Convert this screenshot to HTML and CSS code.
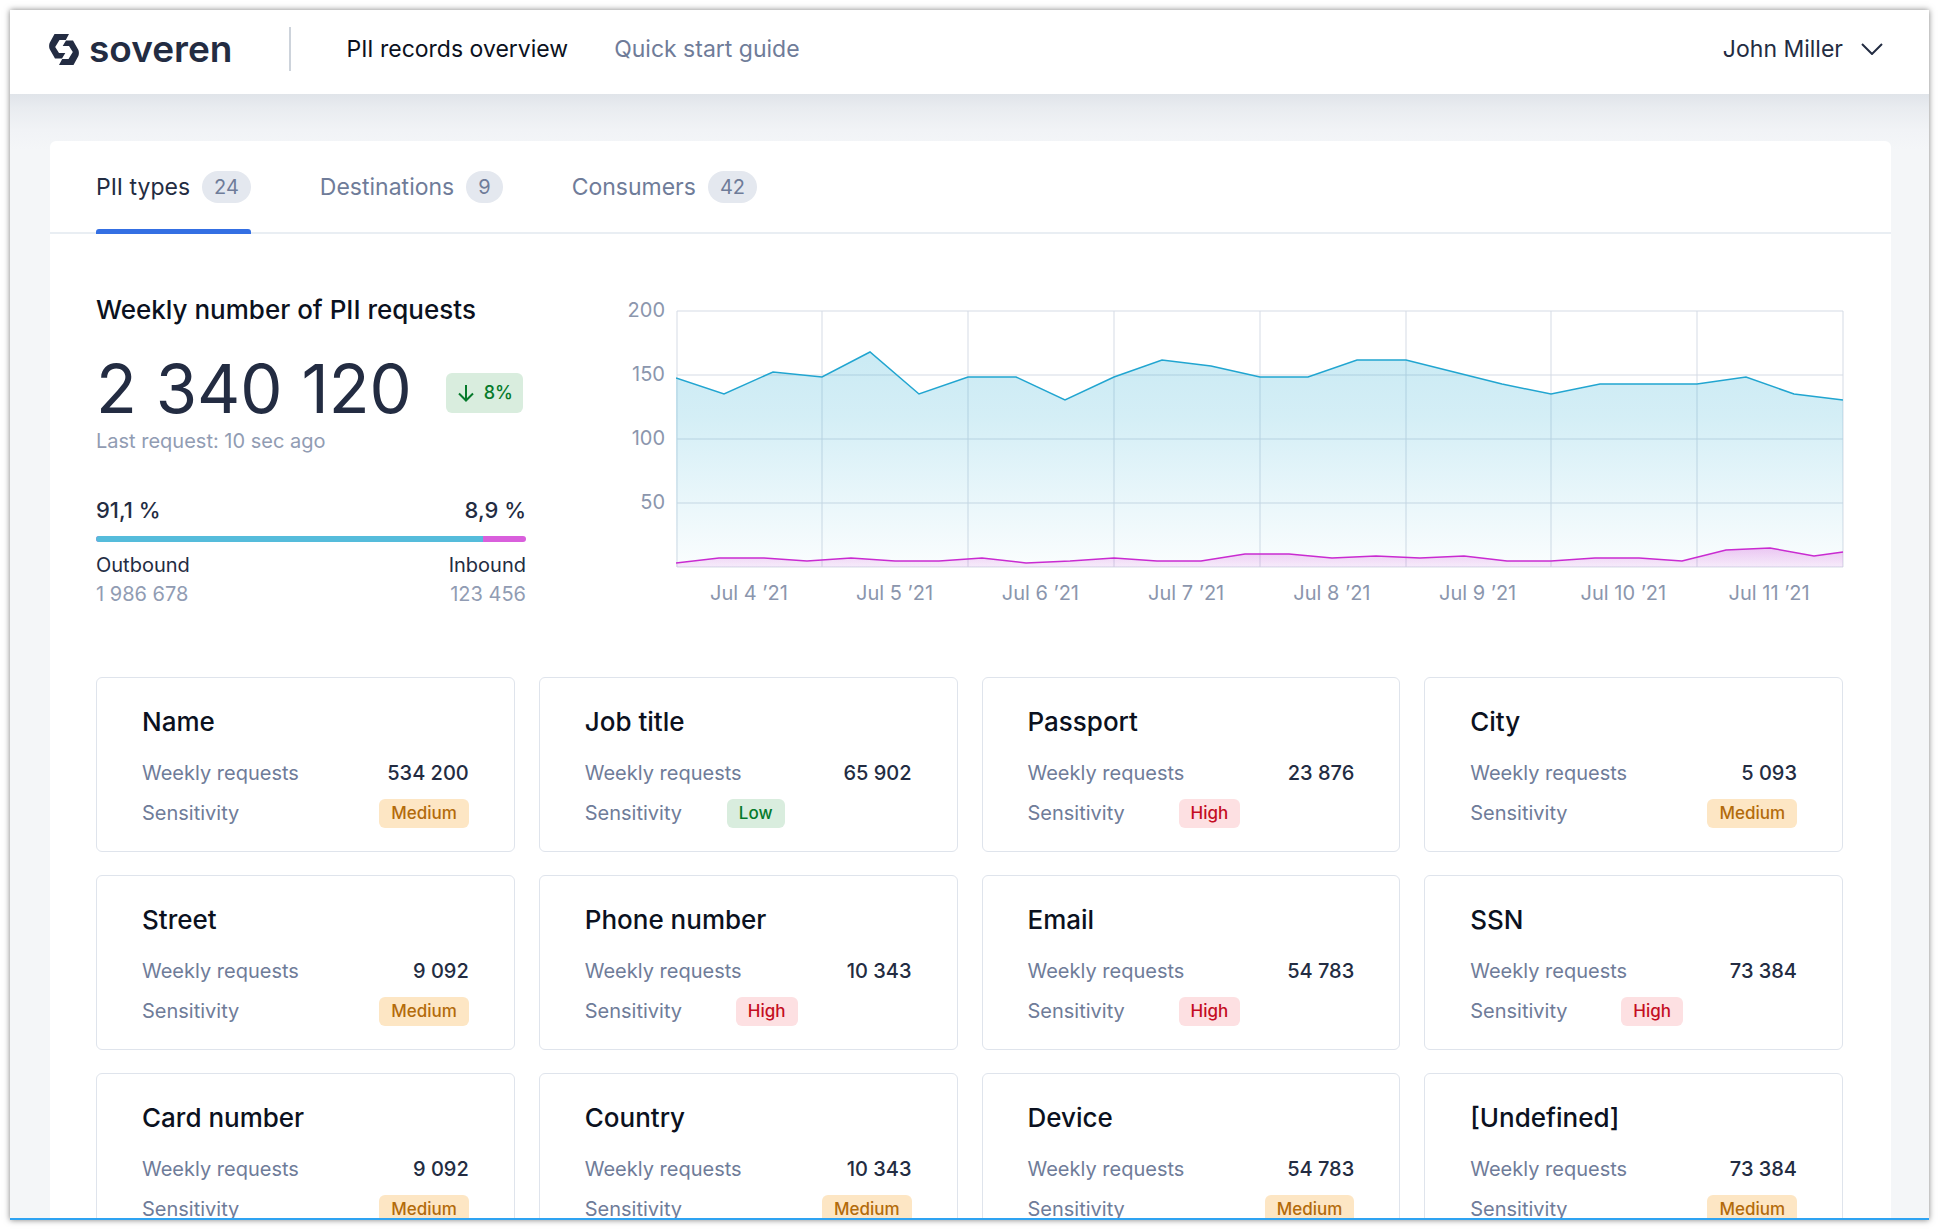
FILE: index.html
```html
<!DOCTYPE html>
<html lang="en">
<head>
<meta charset="utf-8">
<title>PII records overview</title>
<link rel="stylesheet" href="styles.css">
</head>
<body>
<div class="window">
  <header class="header">
    <a class="logo" href="#">
      <svg class="logo__mark" viewBox="0 0 30 31" aria-hidden="true">
        <path d="M5.500 0H20L16.800 6H10.500L6.200 13L10 19H16.300L13 24.500H6L.6 15Q-.4 12 .6 9Z"/>
        <path d="M24.500 31H10L13.200 25H19.500L23.800 18L20 12H13.700L17 6.500H24L29.400 16Q30.400 19 29.400 22Z"/>
      </svg>
      <span class="logo__name">soveren</span>
    </a>
    <nav class="nav">
      <a class="nav__link nav__link--active" href="#">PII records overview</a>
      <a class="nav__link" href="#">Quick start guide</a>
    </nav>
    <button class="user" type="button">John Miller
      <svg class="user__arrow" viewBox="0 0 22 12" aria-hidden="true"><path d="M1 1L11 11L21 1"/></svg>
    </button>
  </header>

  <main class="panel">
    <div class="tabs" role="tablist">
      <button class="tab tab--active" role="tab" aria-selected="true" type="button">PII types <span class="tab__count">24</span></button>
      <button class="tab" role="tab" aria-selected="false" type="button">Destinations <span class="tab__count">9</span></button>
      <button class="tab" role="tab" aria-selected="false" type="button">Consumers <span class="tab__count">42</span></button>
    </div>

    <section class="overview">
      <div class="summary">
        <h1 class="summary__title">Weekly number of PII requests</h1>
        <div class="summary__total">
          <span class="summary__number">2 340 120</span>
          <span class="trend"><svg class="trend__arrow" viewBox="0 0 16 18" aria-hidden="true"><path d="M8 1V16M1 9.500L8 16.500L15 9.500"/></svg>8%</span>
        </div>
        <p class="summary__last">Last request: 10 sec ago</p>
        <div class="split">
          <div class="split__row split__row--share"><span>91,1 %</span><span>8,9 %</span></div>
          <div class="split__bar"><div class="split__out" style="width: 90%"></div></div>
          <div class="split__row split__row--label"><span>Outbound</span><span>Inbound</span></div>
          <div class="split__row split__row--count"><span>1 986 678</span><span>123 456</span></div>
        </div>
      </div>

      <div class="chart">
        <div class="chart__scale"><span>200</span><span>150</span><span>100</span><span>50</span></div>
        <svg class="chart__plot" viewBox="0 0 1168 258" preserveAspectRatio="none" role="img" aria-label="PII requests per day">
          <defs>
            <linearGradient id="out" x1="0" y1="0" x2="0" y2="1"><stop offset="0" stop-color="#1ca6cf" stop-opacity=".23"/><stop offset=".3" stop-color="#1ca6cf" stop-opacity=".19"/><stop offset="1" stop-color="#1ca6cf" stop-opacity=".02"/></linearGradient>
            <linearGradient id="in" x1="0" y1="0" x2="0" y2="1"><stop offset="0" stop-color="#c81fd0" stop-opacity=".24"/><stop offset="1" stop-color="#c81fd0" stop-opacity=".08"/></linearGradient>
          </defs>
          <path class="chart__grid" d="M1 1H1167V257H1ZM1 65H1167M1 129H1167M1 193H1167M146 1V257M292 1V257M438 1V257M584 1V257M730 1V257M875 1V257M1021 1V257"/>
          <path fill="url(#out)" d="M0 68L48 84L97 62L146 67L194 42L243 84L292 67H340L389 90L438 67L486 50L535 56L584 67H632L681 50H730L778 62L826 74L875 84L924 74H1021L1070 67L1118 84L1167 90V257H0Z"/>
          <path fill="url(#in)" d="M0 253L43 248H88L131 251L175 248L219 251H263L306 248L350 253L394 251L438 248L481 251H525L569 244H613L656 248L700 246L744 248L788 246L831 251H875L919 248H963L1006 251L1050 240L1094 238L1138 246L1167 242V257H0Z"/>
          <path class="chart__line chart__line--out" stroke-width="1.5" d="M0 68L48 84L97 62L146 67L194 42L243 84L292 67H340L389 90L438 67L486 50L535 56L584 67H632L681 50H730L778 62L826 74L875 84L924 74H1021L1070 67L1118 84L1167 90"/>
          <path class="chart__line chart__line--in" stroke-width="1.5" d="M0 253L43 248H88L131 251L175 248L219 251H263L306 248L350 253L394 251L438 248L481 251H525L569 244H613L656 248L700 246L744 248L788 246L831 251H875L919 248H963L1006 251L1050 240L1094 238L1138 246L1167 242"/>
        </svg>
        <div class="chart__days"><span>Jul 4 ’21</span><span>Jul 5 ’21</span><span>Jul 6 ’21</span><span>Jul 7 ’21</span><span>Jul 8 ’21</span><span>Jul 9 ’21</span><span>Jul 10 ’21</span><span>Jul 11 ’21</span></div>
      </div>
    </section>

    <section class="cards">
      <article class="card"><h2 class="card__title">Name</h2><dl class="facts"><div class="fact"><dt>Weekly requests</dt><dd>534 200</dd></div><div class="fact"><dt>Sensitivity</dt><dd class="badge badge--medium">Medium</dd></div></dl></article>
      <article class="card"><h2 class="card__title">Job title</h2><dl class="facts"><div class="fact"><dt>Weekly requests</dt><dd>65 902</dd></div><div class="fact"><dt>Sensitivity</dt><dd class="badge badge--low">Low</dd></div></dl></article>
      <article class="card"><h2 class="card__title">Passport</h2><dl class="facts"><div class="fact"><dt>Weekly requests</dt><dd>23 876</dd></div><div class="fact"><dt>Sensitivity</dt><dd class="badge badge--high">High</dd></div></dl></article>
      <article class="card"><h2 class="card__title">City</h2><dl class="facts"><div class="fact"><dt>Weekly requests</dt><dd>5 093</dd></div><div class="fact"><dt>Sensitivity</dt><dd class="badge badge--medium">Medium</dd></div></dl></article>
      <article class="card"><h2 class="card__title">Street</h2><dl class="facts"><div class="fact"><dt>Weekly requests</dt><dd>9 092</dd></div><div class="fact"><dt>Sensitivity</dt><dd class="badge badge--medium">Medium</dd></div></dl></article>
      <article class="card"><h2 class="card__title">Phone number</h2><dl class="facts"><div class="fact"><dt>Weekly requests</dt><dd>10 343</dd></div><div class="fact"><dt>Sensitivity</dt><dd class="badge badge--high">High</dd></div></dl></article>
      <article class="card"><h2 class="card__title">Email</h2><dl class="facts"><div class="fact"><dt>Weekly requests</dt><dd>54 783</dd></div><div class="fact"><dt>Sensitivity</dt><dd class="badge badge--high">High</dd></div></dl></article>
      <article class="card"><h2 class="card__title">SSN</h2><dl class="facts"><div class="fact"><dt>Weekly requests</dt><dd>73 384</dd></div><div class="fact"><dt>Sensitivity</dt><dd class="badge badge--high">High</dd></div></dl></article>
      <article class="card"><h2 class="card__title">Card number</h2><dl class="facts"><div class="fact"><dt>Weekly requests</dt><dd>9 092</dd></div><div class="fact"><dt>Sensitivity</dt><dd class="badge badge--medium">Medium</dd></div></dl></article>
      <article class="card"><h2 class="card__title">Country</h2><dl class="facts"><div class="fact"><dt>Weekly requests</dt><dd>10 343</dd></div><div class="fact"><dt>Sensitivity</dt><dd class="badge badge--medium">Medium</dd></div></dl></article>
      <article class="card"><h2 class="card__title">Device</h2><dl class="facts"><div class="fact"><dt>Weekly requests</dt><dd>54 783</dd></div><div class="fact"><dt>Sensitivity</dt><dd class="badge badge--medium">Medium</dd></div></dl></article>
      <article class="card"><h2 class="card__title">[Undefined]</h2><dl class="facts"><div class="fact"><dt>Weekly requests</dt><dd>73 384</dd></div><div class="fact"><dt>Sensitivity</dt><dd class="badge badge--medium">Medium</dd></div></dl></article>
    </section>
  </main>
</div>
</body>
</html>
```
FILE: styles.css
```css
* { box-sizing: border-box; }

body {
  margin: 0;
  padding: 10px;
  height: 100vh;
  overflow: hidden;
  background: #fff;
  font-family: Inter, sans-serif;
  font-size: 20px;
  line-height: 24px;
  color: #232c42;
}

h1, h2, p, dl, dd { margin: 0; font-weight: 400; }
button { border: 0; padding: 0; background: none; font: inherit; color: inherit; }
a { text-decoration: none; color: inherit; }

.window {
  height: 100%;
  overflow: hidden;
  background: linear-gradient(#e0e4e9 84px, #e9ecf0 98px, #f1f3f6 120px, #f4f6f8 140px);
  border-bottom: 2px solid #2ea3f2;
  box-shadow: 0 0 6px rgba(0, 0, 0, .5);
}

.header {
  display: flex;
  align-items: center;
  height: 84px;
  padding: 0 46px 6px 39px;
  background: #fff;
  font-size: 23px;
}

.logo { display: flex; align-items: center; gap: 10px; }
.logo__mark { width: 30px; height: 31px; fill: #232c42; }
.logo__name { font-size: 37px; font-weight: 600; line-height: 40px; }

.nav {
  display: flex;
  align-items: center;
  gap: 46px;
  height: 44px;
  margin-left: 57px;
  padding-left: 55px;
  border-left: 2px solid #cdd3db;
}
.nav__link { color: #6f7c99; }
.nav__link--active { color: #0b1120; }

.user { display: flex; align-items: center; gap: 18px; margin-left: auto; }
.user__arrow { width: 22px; height: 12px; fill: none; stroke: #232c42; stroke-width: 2; }

.panel {
  margin: 47px 38px 0 40px;
  background: #fff;
  border-radius: 6px;
}

.tabs {
  display: flex;
  gap: 69px;
  height: 93px;
  padding: 0 46px;
  border-bottom: 2px solid #e9eef3;
}
.tab {
  position: relative;
  display: flex;
  align-items: center;
  gap: 12px;
  height: 93px;
  padding-bottom: 2px;
  font-size: 23px;
  color: #6f7c99;
}
.tab--active { color: #232c42; }
.tab--active::after {
  content: "";
  position: absolute;
  left: 0;
  right: 0;
  bottom: 0;
  height: 5px;
  border-radius: 3px 3px 0 0;
  background: #346fe3;
}
.tab__count {
  padding: 4px 12px;
  border-radius: 16px;
  background: #e4e8ef;
  color: #6f7c99;
  font-size: 20px;
}

.overview { display: flex; gap: 94px; padding: 62px 47px 0 46px; }

.summary { flex: none; width: 430px; }
.summary__title { font-size: 26px; font-weight: 500; line-height: 28px; color: #0b1120; }
.summary__total { display: flex; align-items: flex-end; justify-content: space-between; margin-top: 41px; padding-right: 3px; }
.summary__number { font-size: 67px; line-height: 48px; }
.trend {
  display: flex;
  align-items: center;
  gap: 10px;
  padding: 8px 10px 8px 12px;
  border-radius: 6px;
  background: #d9edde;
  color: #067a2b;
  font-size: 18px;
  font-weight: 500;
}
.trend__arrow { width: 16px; height: 18px; fill: none; stroke: #067a2b; stroke-width: 2; }
.summary__last { margin-top: 16px; color: #919cb3; }

.split { margin-top: 45px; }
.split__row { display: flex; justify-content: space-between; }
.split__row--share { font-size: 22px; font-weight: 500; }
.split__bar { height: 6px; margin: 14px 0 11px; border-radius: 3px; overflow: hidden; background: #d95fdc; }
.split__out { height: 6px; background: #55bcdb; }
.split__row--count { margin-top: 5px; color: #919cb3; }

.chart {
  flex: 1;
  display: grid;
  grid-template-columns: 45px 1fr;
  column-gap: 11px;
  align-content: start;
  padding-top: 2px;
  color: #8b96ad;
}
.chart__scale { display: flex; flex-direction: column; gap: 40px; text-align: right; }
.chart__plot { display: block; width: 100%; height: 258px; margin-top: 12px; }
.chart__grid { fill: none; stroke: #d5dbe5; stroke-width: 1; }
.chart__line { fill: none; }
.chart__line--out { stroke: #21a5d0; }
.chart__line--in { stroke: #c92bd1; }
.chart__days { grid-column: 2; display: grid; grid-template-columns: repeat(8, 1fr); margin-top: 13px; padding-right: 2px; text-align: center; }

.cards { display: grid; grid-template-columns: repeat(4, 1fr); gap: 23px 24px; padding: 71px 48px 46px 46px; }
.card { padding: 28px 45px 26px; border: 1px solid #dfe4ec; border-radius: 6px; }
.card__title { font-size: 26px; font-weight: 500; line-height: 32px; color: #0b1120; }
.facts { margin-top: 23px; }
.fact { display: flex; align-items: center; justify-content: space-between; height: 24px; color: #6f7c99; }
.fact + .fact { margin-top: 16px; }
.fact dd { color: #232c42; font-weight: 500; }
.fact .badge { padding: 2px 12px; border-radius: 6px; font-size: 17px; line-height: 25px; }
.fact .badge--medium { background: #fde6c4; color: #b36b0b; }
.fact .badge--low { margin-right: 127px; background: #d9edde; color: #067a2b; }
.fact .badge--high { margin-right: 114px; background: #fde0e2; color: #c40d22; }
```
